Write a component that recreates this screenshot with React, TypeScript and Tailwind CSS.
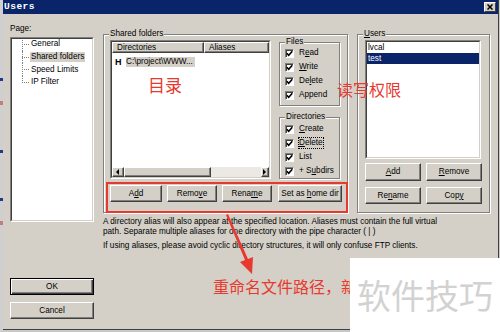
import React from "react";

const ui = "font-['Liberation_Sans',Arial,sans-serif] text-[8.2px] leading-[10px] text-black";

function Btn({
  children,
  className = "",
  primary = false,
}: {
  children?: React.ReactNode;
  className?: string;
  primary?: boolean;
}) {
  return (
    <div
      className={
        primary
          ? `flex items-center justify-center bg-[#d4d0c8] border border-black shadow-[inset_1px_1px_0_#fff,inset_-1px_-1px_0_#404040,inset_-2px_-2px_0_#808080] ${className}`
          : `flex items-center justify-center bg-[#d4d0c8] border border-t-white border-l-white border-r-[#404040] border-b-[#404040] shadow-[inset_-1px_-1px_0_#808080] ${className}`
      }
    >
      <span className="whitespace-pre">{children}</span>
    </div>
  );
}

function Group({
  label,
  className = "",
  children,
}: {
  label: React.ReactNode;
  className?: string;
  children?: React.ReactNode;
}) {
  return (
    <div
      className={`flex flex-col border border-[#808080] shadow-[inset_1px_1px_0_#fff,1px_1px_0_#fff] ${className}`}
    >
      <div className="h-0">
        <div className="-mt-[6px] ml-[5px] w-fit bg-[#d4d0c8] px-[1px]">{label}</div>
      </div>
      {children}
    </div>
  );
}

function Check({ label, focus = false }: { label: React.ReactNode; focus?: boolean }) {
  return (
    <div className="flex h-[14px] items-center gap-[5px]">
      <div className="flex h-[9px] w-[9px] items-center justify-center border border-t-[#808080] border-l-[#808080] border-r-white border-b-white bg-white shadow-[inset_1px_1px_0_#404040]">
        <svg width="7" height="7" viewBox="0 0 7 7">
          <path d="M0.8 3.2 L2.7 5.2 L6.3 1.2" stroke="#000" strokeWidth="1.6" fill="none" />
        </svg>
      </div>
      <span className={focus ? "outline outline-1 outline-dotted outline-black" : ""}>{label}</span>
    </div>
  );
}

function Sunken({ className = "", children }: { className?: string; children?: React.ReactNode }) {
  return (
    <div
      className={`border border-t-[#808080] border-l-[#808080] border-r-white border-b-white ${className}`}
    >
      <div className="flex h-full w-full flex-col overflow-hidden border border-t-[#404040] border-l-[#404040] border-r-[#d4d0c8] border-b-[#d4d0c8] bg-white">
        {children}
      </div>
    </div>
  );
}

function TreeItem({ label, selected = false, last = false }: { label: string; selected?: boolean; last?: boolean }) {
  return (
    <div className="flex h-[12.7px] items-center">
      <div className="relative h-full w-[8px]">
        <div
          className={`absolute left-0 top-0 w-0 border-l border-dotted border-[#808080] ${last ? "h-[7px]" : "h-full"}`}
        />
        <div className="absolute left-0 top-[6px] h-0 w-[7px] border-t border-dotted border-[#808080]" />
      </div>
      <span className={`px-[1px] ${selected ? "bg-[#d4d0c8]" : ""}`}>{label}</span>
    </div>
  );
}

export default function App() {
  return (
    <div className={`relative flex h-[332px] w-[500px] overflow-hidden bg-[#c8c8c8] ${ui}`}>
      {/* strip of the window behind */}
      <div className="flex w-[3px] flex-col bg-[#cfcfcf]">
        <div className="mt-[78px] h-[3px] bg-[#203a8a]" />
        <div className="mt-[20px] h-[4px] bg-[#c08080]" />
        <div className="mt-[45px] h-[3px] bg-[#203a8a]" />
        <div className="mt-[45px] h-[3px] bg-[#203a8a]" />
        <div className="mt-[20px] h-[4px] bg-[#c08080]" />
      </div>

      {/* dialog */}
      <div className="flex h-[330px] w-[496px] flex-col border-r border-b border-r-[#404040] border-b-[#404040] bg-[#d4d0c8]">
        {/* title bar */}
        <div className="flex h-[14px] items-center justify-between bg-[#0a246a] pl-[1px] pr-[2px]">
          <span className="font-['Liberation_Mono',monospace] text-[9.5px] font-bold tracking-[0.5px] text-white">
            Users
          </span>
          <div className="flex h-[10px] w-[12px] items-center justify-center border border-t-white border-l-white border-r-[#404040] border-b-[#404040] bg-[#d4d0c8]">
            <svg width="6" height="6" viewBox="0 0 6 6">
              <path d="M0.5 0.5 L5.5 5.5 M5.5 0.5 L0.5 5.5" stroke="#000" strokeWidth="1.5" />
            </svg>
          </div>
        </div>

        <div className="flex flex-1">
          {/* left column */}
          <div className="ml-[7px] flex w-[84px] flex-col">
            <div className="mt-[10px] h-[10px]">Page:</div>
            <Sunken className="mt-[3px] h-[185px] w-[84px]">
              <div className="-mt-[1px] pl-[10px]">
                <TreeItem label="General" />
                <TreeItem label="Shared folders" selected />
                <TreeItem label="Speed Limits" />
                <TreeItem label="IP Filter" last />
              </div>
            </Sunken>
            <Btn primary className="mt-[56px] h-[17px] w-[84px]">
              OK
            </Btn>
            <Btn className="mt-[7px] h-[17px] w-[84px]">Cancel</Btn>
          </div>

          {/* right area */}
          <div className="ml-[9px] flex flex-col">
            <div className="mt-[20px] flex gap-[9px]">
              {/* shared folders */}
              <Group label="Shared folders" className="h-[179px] w-[245px]">
                <div className="flex items-start pl-[6px]">
                  <Sunken className="mt-[5px] h-[139px] w-[161px]">
                    <div className="flex h-[11px] shrink-0">
                      <div className="flex w-[92px] items-center border border-t-white border-l-white border-r-[#404040] border-b-[#404040] bg-[#d4d0c8] pl-[4px] shadow-[inset_-1px_-1px_0_#808080]">
                        Directories
                      </div>
                      <div className="flex flex-1 items-center border border-t-white border-l-white border-r-[#404040] border-b-[#404040] bg-[#d4d0c8] pl-[4px] shadow-[inset_-1px_-1px_0_#808080]">
                        Aliases
                      </div>
                    </div>
                    <div className="mt-[3px] flex h-[11px] items-center pl-[3px]">
                      <span className="w-[11px] text-[9px] font-bold">H</span>
                      <span className="bg-[#d4d0c8] pr-[2px]">C:\project\WWW...</span>
                    </div>
                    <div className="flex-1" />
                    <div className="flex h-[10px] shrink-0">
                      <Btn className="h-[10px] w-[12px]">
                        <svg width="4" height="6" viewBox="0 0 4 6" className="block">
                          <path d="M3 0 L0 3 L3 6 Z" fill="#000" />
                        </svg>
                      </Btn>
                      <Btn className="h-[10px] w-[87px]" />
                      <div className="flex-1 bg-[#ece9e4]" />
                      <Btn className="h-[10px] w-[8px]">
                        <svg width="4" height="6" viewBox="0 0 4 6" className="block">
                          <path d="M0 0 L3 3 L0 6 Z" fill="#000" />
                        </svg>
                      </Btn>
                    </div>
                  </Sunken>
                  <div className="ml-[8px] flex flex-col">
                    <Group label="Files" className="mt-[7px] h-[64px] w-[61px]">
                      <div className="pl-[5px] pt-[3px]">
                        <Check label={<>R<u>e</u>ad</>} />
                        <Check label={<><u>W</u>rite</>} />
                        <Check label={<>De<u>l</u>ete</>} />
                        <Check label="Append" />
                      </div>
                    </Group>
                    <Group label="Directories" className="mt-[11px] h-[62px] w-[61px]">
                      <div className="pl-[5px] pt-[4px]">
                        <Check label={<><u>C</u>reate</>} />
                        <Check label={<><u>D</u>elete</>} focus />
                        <Check label="List" />
                        <Check label={<>+ S<u>u</u>bdirs</>} />
                      </div>
                    </Group>
                  </div>
                </div>
                <div className="mt-[6px] flex pl-[6px]">
                  <Btn className="h-[17px] w-[52px]">
                    A<u>d</u>d
                  </Btn>
                  <Btn className="ml-[5px] h-[17px] w-[50px]">
                    Remo<u>v</u>e
                  </Btn>
                  <Btn className="ml-[5px] h-[17px] w-[50px]">
                    Rena<u>m</u>e
                  </Btn>
                  <Btn className="ml-[6px] h-[17px] w-[64px]">
                    Set as <u>h</u>ome dir
                  </Btn>
                </div>
              </Group>

              {/* users */}
              <Group
                label={
                  <>
                    <u>U</u>sers
                  </>
                }
                className="h-[179px] w-[133px]"
              >
                <div className="flex flex-col pl-[7px]">
                  <Sunken className="mt-[5px] h-[119px] w-[116px]">
                    <div className="flex h-[11px] items-center pl-[1px]">lvcal</div>
                    <div className="flex h-[11px] items-center bg-[#0a246a] pl-[1px] text-white">test</div>
                  </Sunken>
                  <div className="mt-[4px] flex gap-[5px]">
                    <Btn className="h-[18px] w-[56px]">
                      <u>A</u>dd
                    </Btn>
                    <Btn className="h-[18px] w-[56px]">
                      <u>R</u>emove
                    </Btn>
                  </div>
                  <div className="mt-[6px] flex gap-[5px]">
                    <Btn className="h-[17px] w-[56px]">
                      Re<u>n</u>ame
                    </Btn>
                    <Btn className="h-[17px] w-[56px]">
                      Cop<u>y</u>
                    </Btn>
                  </div>
                </div>
              </Group>
            </div>

            <div className="mt-[4px] w-[345px]">
              <p>
                A directory alias will also appear at the specified location. Aliases must contain the full virtual
                path. Separate multiple aliases for one directory with the pipe character ( | )
              </p>
              <p className="mt-[4px]">
                If using aliases, please avoid cyclic directory structures, it will only confuse FTP clients.
              </p>
            </div>
          </div>
        </div>
      </div>

      {/* annotations */}
      <div className="absolute left-[106px] top-[182px] h-[31px] w-[242px] border-2 border-[#e8392e]" />
      <div className="absolute left-[148px] top-[75px] font-['Noto_Sans_CJK_SC',sans-serif] text-[17px] leading-[20px] text-[#e8392e]">
        目录
      </div>
      <div className="absolute left-[337px] top-[79px] font-['Noto_Sans_CJK_SC',sans-serif] text-[16px] leading-[20px] text-[#e8392e]">
        读写权限
      </div>
      <svg className="absolute left-[220px] top-[212px]" width="40" height="66" viewBox="0 0 40 66">
        <path d="M6 3 L25 48 L20 50 L32 62 L33 45 L28 47 L8 2 Z" fill="#e8392e" />
      </svg>
      <div className="absolute left-[213px] top-[276px] font-['Noto_Sans_CJK_SC',sans-serif] text-[16px] leading-[20px] text-[#e8392e]">
        重命名文件路径，新
      </div>
      <div className="absolute left-[350px] top-[258px] flex h-[74px] w-[150px] items-center justify-center bg-white">
        <span className="font-['Noto_Sans_CJK_SC',sans-serif] text-[34px] leading-[40px] text-[#d2d2d2]">软件技巧</span>
      </div>
    </div>
  );
}
